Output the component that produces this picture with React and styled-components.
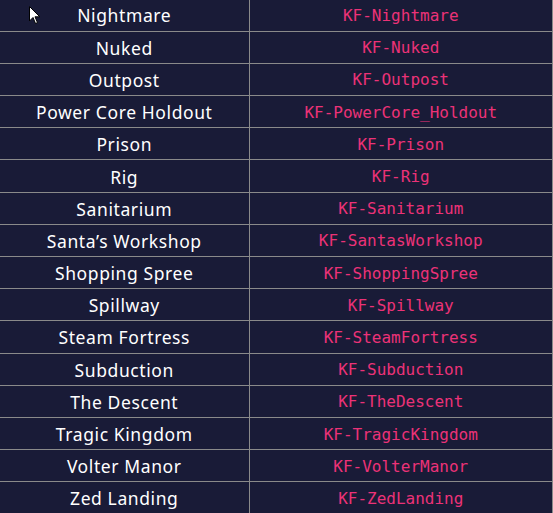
import React from "react";
import styled, { createGlobalStyle } from "styled-components";

const maps = [
  ["Nightmare", "KF-Nightmare"],
  ["Nuked", "KF-Nuked"],
  ["Outpost", "KF-Outpost"],
  ["Power Core Holdout", "KF-PowerCore_Holdout"],
  ["Prison", "KF-Prison"],
  ["Rig", "KF-Rig"],
  ["Sanitarium", "KF-Sanitarium"],
  ["Santa’s Workshop", "KF-SantasWorkshop"],
  ["Shopping Spree", "KF-ShoppingSpree"],
  ["Spillway", "KF-Spillway"],
  ["Steam Fortress", "KF-SteamFortress"],
  ["Subduction", "KF-Subduction"],
  ["The Descent", "KF-TheDescent"],
  ["Tragic Kingdom", "KF-TragicKingdom"],
  ["Volter Manor", "KF-VolterManor"],
  ["Zed Landing", "KF-ZedLanding"],
];

const GlobalStyle = createGlobalStyle`
  html, body {
    margin: 0;
    background: #191b37;
    overflow: hidden;
  }
`;

const Page = styled.div`
  position: relative;
  width: 553px;
  height: 513px;
  overflow: hidden;
  background: #191b37;
`;

const Table = styled.table`
  width: 553px;
  margin-top: -1px;
  border-collapse: collapse;
  table-layout: fixed;
`;

const Row = styled.tr`
  height: 32.2px;
`;

const Cell = styled.td`
  box-sizing: border-box;
  padding: 1px 4px 0;
  text-align: center;
  border-bottom: 1px solid #8a8a8a;
  border-right: 1px solid #8a8a8a;
  width: ${(p) => (p.$name ? "249px" : "auto")};
  color: ${(p) => (p.$name ? "#ffffff" : "#ec3277")};
  font-family: ${(p) =>
    p.$name
      ? '"Noto Sans", sans-serif'
      : '"DejaVu Sans Mono", monospace'};
  font-size: ${(p) => (p.$name ? "17.5px" : "16px")};
  letter-spacing: ${(p) => (p.$name ? "0.6px" : "0")};
  white-space: nowrap;
`;

const Cursor = styled.svg`
  position: absolute;
  left: 29px;
  top: 6px;
`;

export default function App() {
  return (
    <Page>
      <GlobalStyle />
      <Table>
        <tbody>
          {maps.map(([name, id]) => (
            <Row key={id}>
              <Cell $name>{name}</Cell>
              <Cell>{id}</Cell>
            </Row>
          ))}
        </tbody>
      </Table>
      <Cursor width="12" height="19" viewBox="0 0 12 19">
        <path
          d="M0.5 0.5 L0.5 15 L4 11.5 L6.5 17.5 L8.5 16.6 L6 10.8 L10.8 10.8 Z"
          fill="#fff"
          stroke="#000"
          strokeWidth="1"
        />
      </Cursor>
    </Page>
  );
}
